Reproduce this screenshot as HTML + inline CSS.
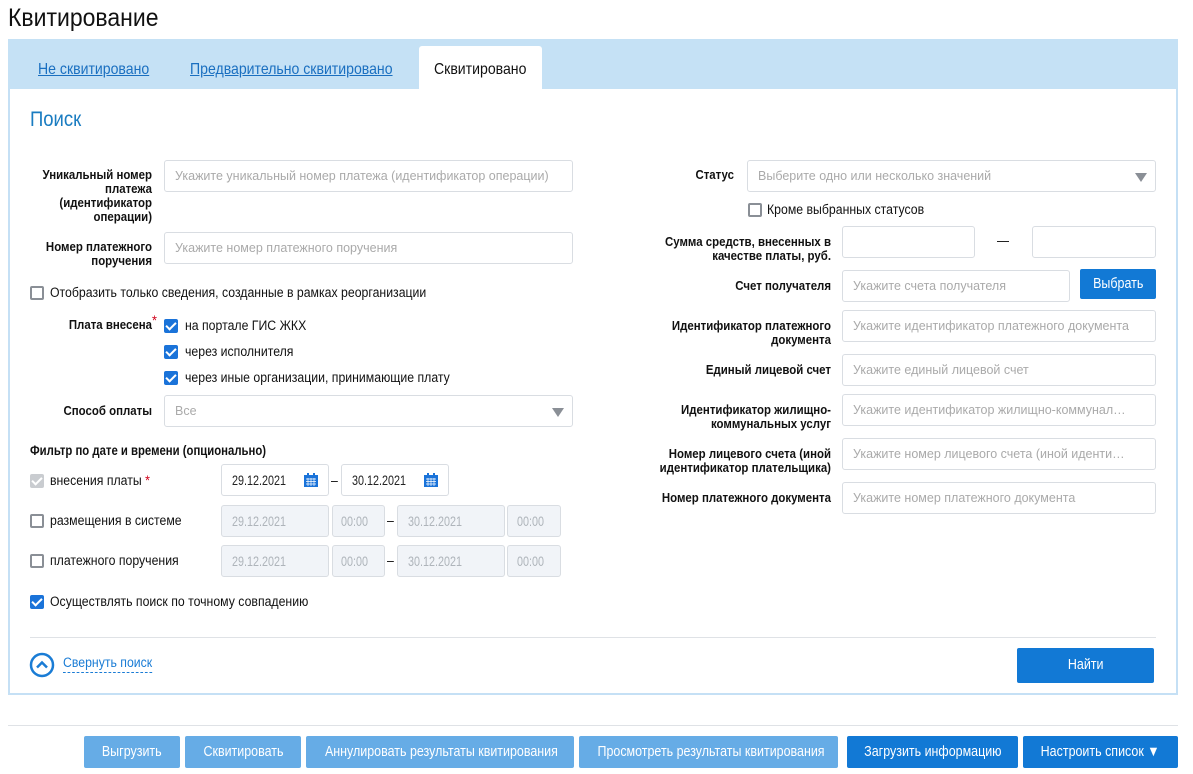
<!DOCTYPE html>
<html><head><meta charset="utf-8"><style>
*{box-sizing:border-box;margin:0;padding:0}
body{width:1193px;height:774px;background:#fff;position:relative;overflow:hidden;font-family:"Liberation Sans",sans-serif;color:#111;font-size:13px}
.a{position:absolute}
.s{display:inline-block;white-space:nowrap}
.sd{display:inline-block;transform:scaleX(.77);transform-origin:0 50%;white-space:nowrap}
.sc{display:inline-block;transform:scaleX(.86);transform-origin:50% 50%;white-space:nowrap}
.lbl{position:absolute;text-align:right;font-weight:bold;font-size:13px;line-height:14px;color:#111;white-space:nowrap;transform:scaleX(.88);transform-origin:100% 0}
.in{position:absolute;height:32px;border:1px solid #d9dde2;border-radius:3px;background:#fff;font-size:12.5px;color:#aaa;padding:0 10px;line-height:30px;white-space:nowrap;overflow:hidden}
.dis{background:#f1f4f8;color:#aeb4ba;font-size:14px}
.cb{position:absolute;width:14px;height:14px;border:2px solid #8a8f96;border-radius:2px;background:#fff}
.cbc{position:absolute;width:14px;height:14px;border-radius:2px;background:#1a73d9}
.cbc:after{content:"";position:absolute;left:4px;top:1px;width:4px;height:8px;border:solid #fff;border-width:0 2px 2px 0;transform:rotate(45deg)}
.t{position:absolute;font-size:13.5px;white-space:nowrap;line-height:14px;transform:scaleX(.91);transform-origin:0 0}
.btn{position:absolute;height:32px;color:#fff;font-size:14.5px;text-align:center;line-height:32px;border-radius:2px;white-space:nowrap;overflow:hidden}
.lt{background:#66ace6}.dk{background:#1279d5}
.arr{position:absolute;right:8px;top:12px;width:0;height:0;border-left:6px solid transparent;border-right:6px solid transparent;border-top:9px solid #8a8f96}
.cal{position:absolute;right:10px;top:8px}
</style></head><body>
<div class="t" style="left:8px;top:4px;font-size:25px;line-height:28px;color:#111;transform:scaleX(.92)">Квитирование</div>
<div class="a" style="left:8px;top:39px;width:1170px;height:656px;border:2px solid #c5e0f5;border-top:none"></div>
<div class="a" style="left:8px;top:39px;width:1170px;height:50px;background:#c5e1f5"></div>
<div class="a" style="left:419px;top:46px;width:123px;height:43px;background:#fff;border-radius:3px 3px 0 0"></div>
<div class="t" style="left:38px;top:61px;font-size:16px;line-height:17px;color:#1a6fc0;text-decoration:underline;transform:scaleX(.88)">Не сквитировано</div>
<div class="t" style="left:190px;top:61px;font-size:16px;line-height:17px;color:#1a6fc0;text-decoration:underline;transform:scaleX(.88)">Предварительно сквитировано</div>
<div class="t" style="left:434px;top:61px;font-size:16px;line-height:17px;color:#111;transform:scaleX(.88)">Сквитировано</div>
<div class="t" style="left:30px;top:109px;font-size:21px;line-height:22px;color:#1a7cc1;transform:scaleX(.88)">Поиск</div>

<div class="lbl" style="left:-48px;top:168px;width:200px">Уникальный номер<br>платежа<br>(идентификатор<br>операции)</div>
<div class="in" style="left:164px;top:160px;width:409px"><span class="s">Укажите уникальный номер платежа (идентификатор операции)</span></div>
<div class="lbl" style="left:-48px;top:240px;width:200px">Номер платежного<br>поручения</div>
<div class="in" style="left:164px;top:232px;width:409px"><span class="s">Укажите номер платежного поручения</span></div>
<div class="cb" style="left:30px;top:286px"></div>
<div class="t" style="left:50px;top:286px">Отобразить только сведения, созданные в рамках реорганизации</div>
<div class="lbl" style="left:-48px;top:318px;width:200px">Плата внесена</div>
<div class="t" style="left:152px;top:313px;color:#d0021b;font-size:14px">*</div>
<div class="cbc" style="left:164px;top:319px"></div><div class="t" style="left:185px;top:319px">на портале ГИС ЖКХ</div>
<div class="cbc" style="left:164px;top:345px"></div><div class="t" style="left:185px;top:345px">через исполнителя</div>
<div class="cbc" style="left:164px;top:371px"></div><div class="t" style="left:185px;top:371px">через иные организации, принимающие плату</div>
<div class="lbl" style="left:-48px;top:404px;width:200px">Способ оплаты</div>
<div class="in" style="left:164px;top:395px;width:409px"><span class="s">Все</span><span class="arr"></span></div>

<div class="t" style="left:30px;top:444px;font-weight:bold;transform:scaleX(.84)">Фильтр по дате и времени (опционально)</div>
<div class="cbc" style="left:30px;top:474px;background:#c9ccd0"></div>
<div class="t" style="left:50px;top:474px">внесения платы <span style="color:#d0021b">*</span></div>
<div class="in" style="left:221px;top:464px;width:108px;color:#222;font-size:14px"><span class="sd">29.12.2021</span><svg class="cal" width="14" height="14" viewBox="0 0 14 14"><rect x="0" y="2" width="14" height="12" fill="#1a73d9"/><rect x="3" y="0" width="2" height="4" fill="#1a73d9"/><rect x="9" y="0" width="2" height="4" fill="#1a73d9"/><path d="M2 6h10M2 8.5h10M2 11h10M4 5v8M7 5v8M10 5v8" stroke="#fff" stroke-width=".7"/></svg></div>
<div class="t" style="left:331px;top:474px">–</div>
<div class="in" style="left:341px;top:464px;width:108px;color:#222;font-size:14px"><span class="sd">30.12.2021</span><svg class="cal" width="14" height="14" viewBox="0 0 14 14"><rect x="0" y="2" width="14" height="12" fill="#1a73d9"/><rect x="3" y="0" width="2" height="4" fill="#1a73d9"/><rect x="9" y="0" width="2" height="4" fill="#1a73d9"/><path d="M2 6h10M2 8.5h10M2 11h10M4 5v8M7 5v8M10 5v8" stroke="#fff" stroke-width=".7"/></svg></div>

<div class="cb" style="left:30px;top:514px"></div><div class="t" style="left:50px;top:514px">размещения в системе</div>
<div class="in dis" style="left:221px;top:505px;width:108px"><span class="sd">29.12.2021</span></div>
<div class="in dis" style="left:332px;top:505px;width:53px;padding:0 8px"><span class="sd">00:00</span></div>
<div class="t" style="left:387px;top:514px">–</div>
<div class="in dis" style="left:397px;top:505px;width:108px"><span class="sd">30.12.2021</span></div>
<div class="in dis" style="left:507px;top:505px;width:54px;padding:0 9px"><span class="sd">00:00</span></div>

<div class="cb" style="left:30px;top:554px"></div><div class="t" style="left:50px;top:554px">платежного поручения</div>
<div class="in dis" style="left:221px;top:545px;width:108px"><span class="sd">29.12.2021</span></div>
<div class="in dis" style="left:332px;top:545px;width:53px;padding:0 8px"><span class="sd">00:00</span></div>
<div class="t" style="left:387px;top:554px">–</div>
<div class="in dis" style="left:397px;top:545px;width:108px"><span class="sd">30.12.2021</span></div>
<div class="in dis" style="left:507px;top:545px;width:54px;padding:0 9px"><span class="sd">00:00</span></div>

<div class="cbc" style="left:30px;top:595px"></div><div class="t" style="left:50px;top:595px">Осуществлять поиск по точному совпадению</div>

<!-- right -->
<div class="lbl" style="left:534px;top:168px;width:200px">Статус</div>
<div class="in" style="left:747px;top:160px;width:409px"><span class="s">Выберите одно или несколько значений</span><span class="arr"></span></div>
<div class="cb" style="left:748px;top:203px"></div><div class="t" style="left:767px;top:203px">Кроме выбранных статусов</div>
<div class="lbl" style="left:531px;top:235px;width:300px">Сумма средств, внесенных в<br>качестве платы, руб.</div>
<div class="in" style="left:842px;top:226px;width:133px"></div>
<div class="a" style="left:997px;top:241px;width:12px;height:1px;background:#222"></div>
<div class="in" style="left:1032px;top:226px;width:124px"></div>
<div class="lbl" style="left:531px;top:279px;width:300px">Счет получателя</div>
<div class="in" style="left:842px;top:270px;width:228px"><span class="s">Укажите счета получателя</span></div>
<div class="btn dk" style="left:1080px;top:269px;width:76px;height:30px;line-height:30px"><span class="sc">Выбрать</span></div>
<div class="lbl" style="left:531px;top:319px;width:300px">Идентификатор платежного<br>документа</div>
<div class="in" style="left:842px;top:310px;width:314px"><span class="s">Укажите идентификатор платежного документа</span></div>
<div class="lbl" style="left:531px;top:363px;width:300px">Единый лицевой счет</div>
<div class="in" style="left:842px;top:354px;width:314px"><span class="s">Укажите единый лицевой счет</span></div>
<div class="lbl" style="left:531px;top:403px;width:300px">Идентификатор жилищно-<br>коммунальных услуг</div>
<div class="in" style="left:842px;top:394px;width:314px"><span class="s">Укажите идентификатор жилищно-коммунал…</span></div>
<div class="lbl" style="left:531px;top:447px;width:300px">Номер лицевого счета (иной<br>идентификатор плательщика)</div>
<div class="in" style="left:842px;top:438px;width:314px"><span class="s">Укажите номер лицевого счета (иной иденти…</span></div>
<div class="lbl" style="left:531px;top:491px;width:300px">Номер платежного документа</div>
<div class="in" style="left:842px;top:482px;width:314px"><span class="s">Укажите номер платежного документа</span></div>

<div class="a" style="left:30px;top:637px;width:1126px;height:1px;background:#dfe2e6"></div>
<svg class="a" style="left:29px;top:652px" width="26" height="26" viewBox="0 0 26 26"><circle cx="13" cy="13" r="11" fill="none" stroke="#1a7cd5" stroke-width="2.5"/><path d="M8 15.5l5-5 5 5" fill="none" stroke="#1a7cd5" stroke-width="2.5"/></svg>
<div class="t" style="left:63px;top:656px;color:#1a7cd5;border-bottom:1px dashed #1a7cd5;padding-bottom:2px">Свернуть поиск</div>
<div class="btn dk" style="left:1017px;top:648px;width:137px;height:35px;line-height:35px"><span class="sc">Найти</span></div>

<div class="a" style="left:8px;top:725px;width:1170px;height:1px;background:#dfe2e6"></div>
<div class="btn lt" style="left:84px;top:736px;width:96px"><span class="sc">Выгрузить</span></div>
<div class="btn lt" style="left:185px;top:736px;width:116px"><span class="sc">Сквитировать</span></div>
<div class="btn lt" style="left:306px;top:736px;width:268px"><span class="sc">Аннулировать результаты квитирования</span></div>
<div class="btn lt" style="left:579px;top:736px;width:259px"><span class="sc">Просмотреть результаты квитирования</span></div>
<div class="btn dk" style="left:847px;top:736px;width:171px"><span class="sc">Загрузить информацию</span></div>
<div class="btn dk" style="left:1023px;top:736px;width:155px"><span class="sc">Настроить список ▼</span></div>
</body></html>
